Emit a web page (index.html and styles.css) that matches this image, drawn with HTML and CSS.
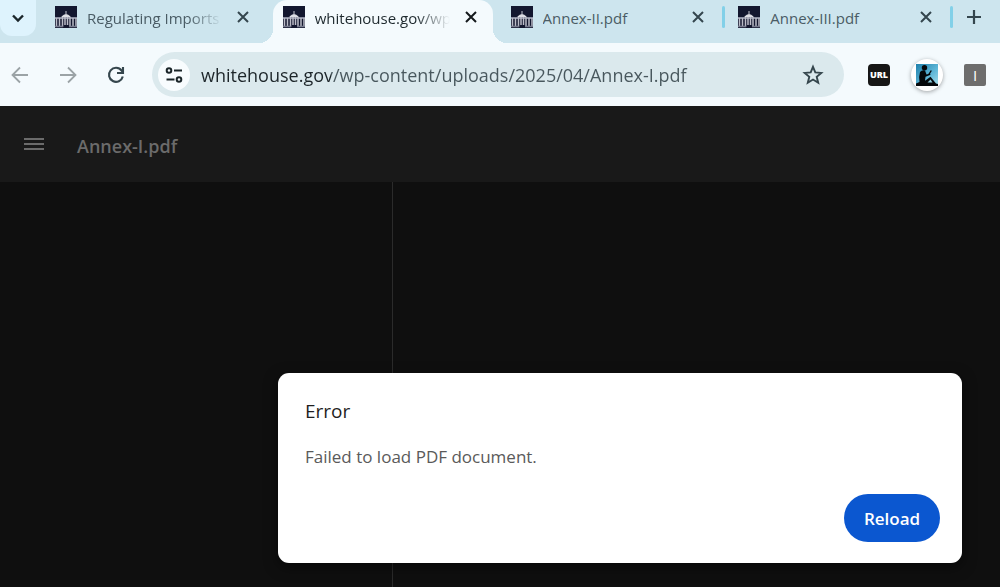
FILE: index.html
```
<!DOCTYPE html>
<html lang="en">
<head>
    <meta charset="UTF-8">
    <meta name="viewport" content="width=device-width, initial-scale=1.0">
    <title>Annex-I.pdf</title>
    <link rel="stylesheet" href="styles.css">
</head>
<body>
    <svg class="symbols" width="0" height="0" aria-hidden="true">
        <symbol id="favicon" viewBox="0 0 22 22">
            <rect width="22" height="22" fill="#13172f"/>
            <path d="M11 5v3" stroke="#c3c5cf" stroke-width="1"/>
            <path d="M6.500 10.500q4.500-5 9 0v1.500h-9z" fill="#dcdde4"/>
            <path d="M0 11h22v2H0z" fill="#8b8fa2"/>
            <path d="M1.500 12v9M4.500 12v9M7.500 11v10M10 11v8M12.500 11v8M15 11v10M18 12v9M21 12v9" stroke="#bcbdc8" stroke-width="1.500"/>
            <path d="M0 20.500h8M14 20.500h8" stroke="#777b8e" stroke-width="1.500"/>
        </symbol>
        <symbol id="close" viewBox="0 0 22 22">
            <path d="M6 6l10 10M16 6L6 16" fill="none" stroke="currentColor" stroke-width="2"/>
        </symbol>
    </svg>

    <nav class="tab-strip">
        <button class="tab-search" aria-label="Search tabs">
            <svg width="14" height="14" viewBox="0 0 14 14"><path d="M2 4.500l5 5 5-5" fill="none" stroke="currentColor" stroke-width="2.400"/></svg>
        </button>
        <div class="tabs">
            <div class="tab">
                <svg class="icon"><use href="#favicon"/></svg>
                <span class="tab-title faded">Regulating Imports</span>
                <button class="tab-close" aria-label="Close tab"><svg class="icon"><use href="#close"/></svg></button>
            </div>
            <div class="tab active">
                <svg class="icon"><use href="#favicon"/></svg>
                <span class="tab-title faded">whitehouse.gov/wp</span>
                <button class="tab-close" aria-label="Close tab"><svg class="icon"><use href="#close"/></svg></button>
            </div>
            <div class="tab divided">
                <svg class="icon"><use href="#favicon"/></svg>
                <span class="tab-title">Annex-II.pdf</span>
                <button class="tab-close" aria-label="Close tab"><svg class="icon"><use href="#close"/></svg></button>
            </div>
            <div class="tab divided">
                <svg class="icon"><use href="#favicon"/></svg>
                <span class="tab-title">Annex-III.pdf</span>
                <button class="tab-close" aria-label="Close tab"><svg class="icon"><use href="#close"/></svg></button>
            </div>
        </div>
        <button class="new-tab" aria-label="New tab">
            <svg width="14" height="14" viewBox="0 0 14 14"><path d="M7 0v14M0 7h14" stroke="currentColor" stroke-width="2.200"/></svg>
        </button>
    </nav>

    <div class="toolbar">
        <div class="nav-buttons">
            <button class="nav-button disabled" aria-label="Back">
                <svg width="18" height="18" viewBox="0 0 18 18"><path d="M17 9H2M9 1.500L1.500 9 9 16.500" fill="none" stroke="currentColor" stroke-width="1.800"/></svg>
            </button>
            <button class="nav-button disabled" aria-label="Forward">
                <svg width="18" height="18" viewBox="0 0 18 18"><path d="M1 9h15M9 1.500L16.500 9 9 16.500" fill="none" stroke="currentColor" stroke-width="1.800"/></svg>
            </button>
            <button class="nav-button" aria-label="Refresh">
                <svg width="18" height="18" viewBox="0 0 18 18"><path d="M15.800 10.500A7 7 0 1 1 14.600 4.600L16 6.500M16 1v6h-6" fill="none" stroke="currentColor" stroke-width="2.100"/></svg>
            </button>
        </div>
        <div class="omnibox">
            <button class="site-info" aria-label="View site information">
                <svg width="18" height="18" viewBox="0 0 18 18" fill="none" stroke="currentColor" stroke-width="2"><circle cx="4" cy="4.500" r="2.300"/><path d="M9 4.500h8M1.500 13.500h8"/><circle cx="14" cy="13.500" r="2.300"/></svg>
            </button>
            <input class="address" type="text" aria-label="Address" value="whitehouse.gov/wp-content/uploads/2025/04/Annex-I.pdf">
            <button class="bookmark" aria-label="Bookmark this tab">
                <svg width="22" height="22" viewBox="0 0 22 22"><path d="M11 2.800l2.300 5.600 6 .5-4.600 3.900 1.500 5.900-5.200-3.200-5.200 3.200 1.500-5.900-4.600-3.900 6-.5z" fill="none" stroke="currentColor" stroke-width="1.900"/></svg>
            </button>
        </div>
        <div class="extensions">
            <button class="extension ext-url">URL</button>
            <button class="extension ext-reader" aria-label="Send to reader">
                <svg width="22" height="22" viewBox="0 0 22 22">
                    <defs>
                        <linearGradient id="sky" x1="0" y1="0" x2="1" y2="1"><stop offset="0" stop-color="#1d7fab"/><stop offset="0.600" stop-color="#63b9d9"/><stop offset="1" stop-color="#a9deea"/></linearGradient>
                    </defs>
                    <rect width="22" height="22" fill="url(#sky)"/>
                    <circle cx="8.500" cy="3.800" r="2.700" fill="#05080b"/>
                    <path d="M4 8q2-2.500 5-1.500l1.500 4 3.500-1 .5 1.300-5 2-.5 4 5.500-4 5.500 6.700 2 .5V22H0v-2.500l3.500-1.500q-1-5 .5-10z" fill="#05080b"/>
                    <path d="M12.500 11l2.800-4.500" stroke="#05080b" stroke-width="1.400"/>
                    <path d="M11.500 18.500l3-3 2 3z" fill="#8ccbdc"/>
                </svg>
            </button>
            <button class="extension ext-letter">I</button>
        </div>
    </div>

    <main class="viewer">
        <header class="viewer-header">
            <button class="menu" aria-label="Menu">
                <svg width="20" height="14" viewBox="0 0 20 14"><path d="M0 2h20M0 7h20M0 12h20" stroke="currentColor" stroke-width="1.800"/></svg>
            </button>
            <h1 class="file-name">Annex-I.pdf</h1>
        </header>
        <div class="viewer-body">
            <aside class="sidebar"></aside>
            <section class="document"></section>
        </div>
        <div class="dialog" role="alertdialog" aria-labelledby="error-title">
            <h2 class="dialog-title" id="error-title">Error</h2>
            <p class="dialog-text">Failed to load PDF document.</p>
            <div class="dialog-actions">
                <button class="reload">Reload</button>
            </div>
        </div>
    </main>
</body>
</html>
```
FILE: styles.css
```
* {
    box-sizing: border-box;
}
body {
    margin: 0;
    min-height: 100vh;
    display: flex;
    flex-direction: column;
    background: #0f0f0f;
    font-family: "Open Sans", "Noto Sans", sans-serif;
    overflow: hidden;
}
button {
    border: none;
    padding: 0;
    background: none;
    color: inherit;
    font-family: inherit;
    display: flex;
    align-items: center;
    justify-content: center;
    flex-shrink: 0;
    cursor: pointer;
}
.symbols {
    position: absolute;
}
.icon {
    display: block;
    width: 22px;
    height: 22px;
    flex-shrink: 0;
}

/* Tabs */
.tab-strip {
    display: flex;
    height: 43px;
    background: #cde5ee;
    color: #34464e;
}
.tab-search {
    width: 36px;
    height: 36px;
    border-radius: 0 0 12px 12px;
    background: #def3fd;
    color: #1b262b;
}
.tabs {
    flex: 1;
    display: flex;
    gap: 8px;
    margin-left: 9px;
}
.tab {
    position: relative;
    flex: 1;
    min-width: 0;
    display: flex;
    align-items: center;
    gap: 10px;
    padding: 0 11px 9px 10px;
}
.tab-title {
    flex: 1;
    min-width: 0;
    overflow: hidden;
    white-space: nowrap;
    font-size: 15px;
    line-height: 24px;
    color: #4a5c65;
    padding-top: 2px;
}
.faded {
    -webkit-mask-image: linear-gradient(to right, #000 75%, transparent 100%);
    mask-image: linear-gradient(to right, #000 75%, transparent 100%);
}
.active {
    background: #f4fafd;
    border-radius: 14px 14px 0 0;
    color: #14191c;
}
.active .tab-title {
    color: #1f2a2f;
}
.active::before,
.active::after {
    content: "";
    position: absolute;
    bottom: 0;
    width: 14px;
    height: 14px;
}
.active::before {
    right: 100%;
    background: radial-gradient(circle at 0 0, transparent 14px, #f4fafd 14px);
}
.active::after {
    left: 100%;
    background: radial-gradient(circle at 100% 0, transparent 14px, #f4fafd 14px);
}
.divided::after {
    content: "";
    position: absolute;
    top: 6px;
    right: -5px;
    width: 3px;
    height: 22px;
    border-radius: 2px;
    background: #82d0e8;
}
.new-tab {
    width: 52px;
    height: 34px;
}

/* Toolbar */
.toolbar {
    display: flex;
    align-items: center;
    height: 63px;
    background: #f4fafd;
    color: #35464d;
}
.nav-buttons {
    display: flex;
    gap: 8px;
}
.nav-button {
    width: 40px;
    height: 40px;
}
.disabled {
    color: #9ba3a6;
}
.omnibox {
    flex: 1;
    min-width: 0;
    display: flex;
    align-items: center;
    height: 45px;
    margin-left: 16px;
    padding: 0 16px 0 6px;
    border-radius: 23px;
    background: #dbe9ed;
}
.site-info {
    width: 32px;
    height: 32px;
    border-radius: 50%;
    background: #f8fcfe;
    color: #1b2529;
}
.address {
    flex: 1;
    min-width: 0;
    border: none;
    outline: none;
    margin-left: 11px;
    padding: 0;
    font-family: inherit;
    font-size: 18px;
    line-height: 28px;
    color: #48575d;
    /* host part is darker than the path */
    background: linear-gradient(to right, #1c2529 130px, #48575d 130px);
    -webkit-background-clip: text;
    background-clip: text;
    -webkit-text-fill-color: transparent;
}
.bookmark {
    width: 30px;
    height: 30px;
}
.extensions {
    display: flex;
    align-items: center;
    gap: 21px;
    padding: 0 14px 0 24px;
}
.extension {
    width: 22px;
    height: 22px;
    border-radius: 4px;
    color: #fff;
    font-size: 9px;
    font-weight: 800;
}
.ext-url {
    background: #161616;
}
.ext-reader {
    width: 32px;
    height: 32px;
    border-radius: 50%;
    background: #fff;
    box-shadow: 0 1px 4px rgba(0, 0, 0, 0.35);
}
.ext-letter {
    border-radius: 2px;
    background: #6d6d6d;
    font-size: 15px;
    font-weight: 400;
}

/* PDF viewer */
.viewer {
    position: relative;
    flex: 1;
    display: flex;
    flex-direction: column;
}
.viewer-header {
    display: flex;
    align-items: center;
    gap: 33px;
    height: 76px;
    padding: 0 24px;
    background: #191919;
    color: #6b6b6b;
}
.file-name {
    margin: 0;
    padding-top: 3px;
    font-size: 18px;
    line-height: 28px;
    font-weight: 600;
}
.viewer-body {
    flex: 1;
    display: flex;
}
.sidebar {
    width: 393px;
    border-right: 1px solid #2b2b2b;
}
.document {
    flex: 1;
}

/* Error dialog */
.dialog {
    position: absolute;
    right: 38px;
    bottom: 24px;
    width: 684px;
    padding: 24px 22px 21px 27px;
    border-radius: 11px;
    background: #fff;
    box-shadow: 0 4px 14px rgba(0, 0, 0, 0.5);
}
.dialog-title {
    margin: 0 0 18px;
    font-size: 19px;
    line-height: 28px;
    font-weight: 400;
    color: #1f1f1f;
}
.dialog-text {
    margin: 0 0 23px;
    font-size: 17px;
    line-height: 28px;
    color: #5a5a5a;
}
.dialog-actions {
    display: flex;
    justify-content: flex-end;
}
.reload {
    width: 96px;
    height: 48px;
    border-radius: 24px;
    background: #0b57d0;
    color: #fff;
    font-size: 17px;
    font-weight: 600;
}
```
